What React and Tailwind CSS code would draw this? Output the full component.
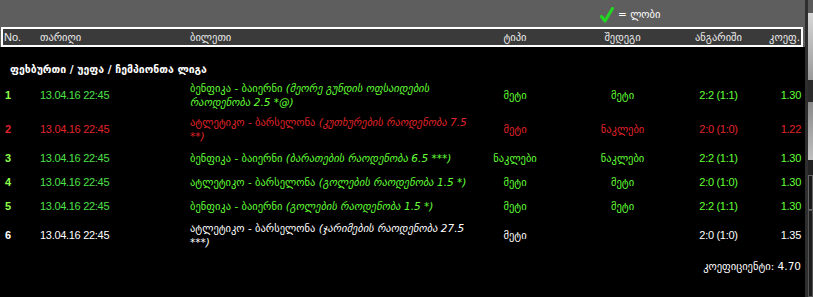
import React from 'react';

const rows = [
    { n: '1', date: '13.04.16 22:45', match: 'ბენფიკა - ბაიერნი', note: ['(მეორე გუნდის ოფსაიდების', 'რაოდენობა 2.5 *@)'], type: 'მეტი', result: 'მეტი', score: '2:2 (1:1)', coef: '1.30', tone: 'green' },
    { n: '2', date: '13.04.16 22:45', match: 'ატლეტიკო - ბარსელონა', note: ['(კუთხურების რაოდენობა 7.5', '**)'], type: 'მეტი', result: 'ნაკლები', score: '2:0 (1:0)', coef: '1.22', tone: 'red' },
    { n: '3', date: '13.04.16 22:45', match: 'ბენფიკა - ბაიერნი', note: ['(ბარათების რაოდენობა 6.5 ***)'], type: 'ნაკლები', result: 'ნაკლები', score: '2:2 (1:1)', coef: '1.30', tone: 'green' },
    { n: '4', date: '13.04.16 22:45', match: 'ატლეტიკო - ბარსელონა', note: ['(გოლების რაოდენობა 1.5 *)'], type: 'მეტი', result: 'მეტი', score: '2:0 (1:0)', coef: '1.30', tone: 'green' },
    { n: '5', date: '13.04.16 22:45', match: 'ბენფიკა - ბაიერნი', note: ['(გოლების რაოდენობა 1.5 *)'], type: 'მეტი', result: 'მეტი', score: '2:2 (1:1)', coef: '1.30', tone: 'green' },
    { n: '6', date: '13.04.16 22:45', match: 'ატლეტიკო - ბარსელონა', note: ['(ჯარიმების რაოდენობა 27.5', '***)'], type: 'მეტი', result: '', score: '2:0 (1:0)', coef: '1.35', tone: 'white' },
];

const tones = {
    green: { num: 'text-[#8dff4a]', date: 'text-[#4fe04a]', text: 'text-[#63ff36]' },
    red: { num: 'text-[#e0242a]', date: 'text-[#e0242a]', text: 'text-[#e0242a]' },
    white: { num: 'text-white', date: 'text-white', text: 'text-white' },
};

const cols = 'grid grid-cols-[36px_150px_287px_76px_139px_53px_1fr]';
// georgian text is set in DejaVu, digits in Liberation
const geo = "font-['DejaVu_Sans',sans-serif] text-[10.5px]";
const num = "font-['Liberation_Sans',sans-serif] text-[11px] tracking-[-0.3px]";

function CheckMark() {
    return (
        <svg width="14" height="16" viewBox="0 0 14 16">
            <path d="M1.5 9.5 L5 14 L12.5 1.5" fill="none" stroke="#1fd81f" strokeWidth="3" strokeLinecap="round" strokeLinejoin="round" />
        </svg>
    );
}

function BetRow({ row }) {
    const t = tones[row.tone];
    return (
        <div className={`${cols} min-h-[24px] py-[3px] items-center leading-[14px]`}>
            <div className={`${num} font-bold ${t.num} pl-[1px]`}>{row.n}</div>
            <div className={`${num} ${t.date}`}>{row.date}</div>
            <div className={`${geo} ${t.text} whitespace-nowrap`}>
                {row.match}{' '}
                <span className="italic">
                    {row.note[0]}
                    {row.note[1] && <br />}
                    {row.note[1]}
                </span>
            </div>
            <div className={`${geo} ${t.text} text-center whitespace-nowrap`}>{row.type}</div>
            <div className={`${geo} ${t.text} text-center`}>{row.result}</div>
            <div className={`${num} ${t.text} text-center whitespace-nowrap`}>{row.score}</div>
            <div className={`${num} ${t.text} text-right`}>{row.coef}</div>
        </div>
    );
}

export default function App() {
    return (
        <div className="flex w-[813px] h-[297px] overflow-hidden bg-black font-['Liberation_Sans','DejaVu_Sans',sans-serif]">
            <div className="w-[805px] flex flex-col">
                <div className="h-[27px] bg-[#5e5e5e] flex items-end pb-[4px] pl-[600px] gap-[4px]">
                    <CheckMark />
                    <span className={`${geo} text-white leading-[14px] mb-[2px]`}>= ლობი</span>
                </div>
                <div className="bg-[#5e5e5e]">
                    <div className={`${cols} ml-[1px] w-[802px] border-2 border-white bg-[#3a3a3a] text-[#ececec] leading-[16px] pl-[1px] pr-[1px]`}>
                        <div className="text-[11px]">No.</div>
                        <div className={geo}>თარიღი</div>
                        <div className={geo}>ბილეთი</div>
                        <div className={`${geo} text-center`}>ტიპი</div>
                        <div className={`${geo} text-center`}>შედეგი</div>
                        <div className={`${geo} text-center whitespace-nowrap`}>ანგარიში</div>
                        <div className={`${geo} text-right`}>კოეფ.</div>
                    </div>
                </div>
                <div className="px-[4px]">
                    <div className={`${geo} pt-[15px] pb-[2px] pl-[6px] text-white font-bold leading-[14px]`}>
                        ფეხბურთი / უეფა / ჩემპიონთა ლიგა
                    </div>
                    {rows.map((row) => (
                        <BetRow key={row.n} row={row} />
                    ))}
                    <div className={`${geo} mt-[7px] text-right text-white leading-[14px]`}>
                        კოეფიციენტი: 4.70
                    </div>
                </div>
            </div>
            <div className="w-[3px] bg-[#2e2e2e]" />
            <div className="w-[5px] flex flex-col">
                <div className="h-[13px] bg-[#5a5a5a]" />
                <div className="h-[67px] bg-gradient-to-b from-[#d8d8d8] to-[#9a9a9a]" />
                <div className="h-[22px] bg-[#2a2a2a]" />
                <div className="h-[58px] bg-gradient-to-b from-[#8a8a8a] to-[#c0c0c0]" />
                <div className="h-[15px] bg-[#222]" />
                <div className="h-[35px] border border-[#666] bg-[#1a1a1a]" />
                <div className="flex-1 border border-[#555] bg-[#1c1c1c]" />
            </div>
        </div>
    );
}
